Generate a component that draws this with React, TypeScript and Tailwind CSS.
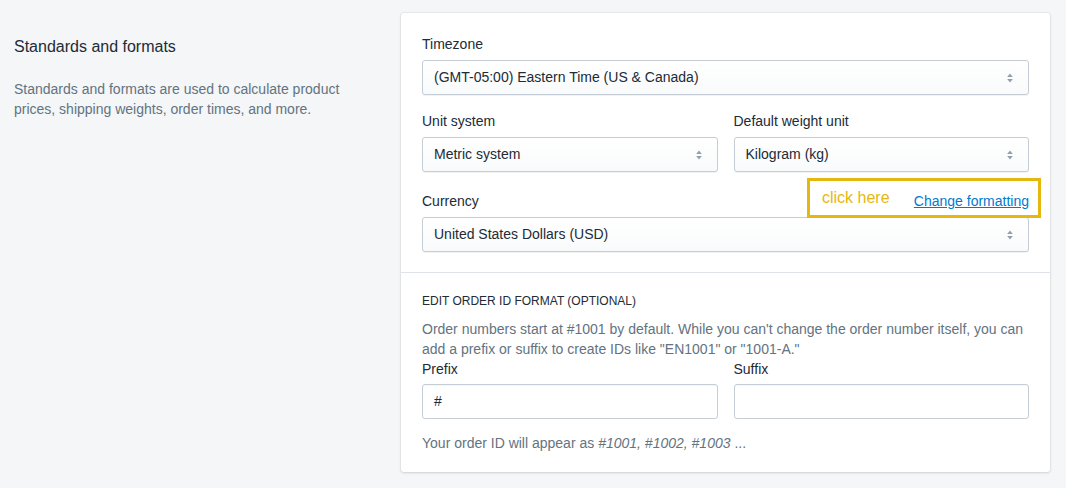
import React from 'react';

const Chevrons: React.FC = () => (
  <svg width="8" height="12" viewBox="0 0 8 12" className="shrink-0">
    <path d="M4 1.5 L6.8 5 H1.2 Z" fill="#919eab" />
    <path d="M4 10.5 L6.8 7 H1.2 Z" fill="#919eab" />
  </svg>
);

const Select: React.FC<{ value: string }> = ({ value }) => (
  <div className="h-[35px] flex items-center justify-between pl-[11px] pr-[14px] rounded-[3px] border border-[#c4cdd5] bg-gradient-to-b from-white to-[#f9fafb] shadow-[0_1px_0_0_rgba(22,29,37,0.05)] text-[14px] text-[#212b36]">
    <span>{value}</span>
    <Chevrons />
  </div>
);

const Input: React.FC<{ value?: string }> = ({ value }) => (
  <div className="h-[35px] flex items-center pl-[11px] rounded-[3px] border border-[#c4cdd5] bg-white shadow-[inset_0_1px_0_0_rgba(99,115,129,0.05)] text-[14px] text-[#212b36]">
    {value}
  </div>
);

const Label: React.FC<{ children: React.ReactNode }> = ({ children }) => (
  <div className="text-[14px] leading-[20px] text-[#212b36] mb-[6px]">{children}</div>
);

export default function App() {
  return (
    <div
      className="min-h-[488px] w-[1066px] bg-[#f4f6f8] flex items-start"
      style={{ fontFamily: '"Liberation Sans", Arial, sans-serif' }}
    >
      <div className="w-[401px] shrink-0 pl-[14px] pr-[40px] pt-[37px]">
        <h2 className="text-[16px] leading-[20px] font-medium text-[#212b36]">Standards and formats</h2>
        <p className="mt-[22px] text-[14px] leading-[20px] text-[#637381]">
          Standards and formats are used to calculate product prices, shipping weights, order times, and more.
        </p>
      </div>

      <div className="mt-[13px] w-[649px] bg-white rounded-[3px] shadow-[0_0_0_1px_rgba(63,63,68,0.05),0_1px_3px_0_rgba(63,63,68,0.15)]">
        <div className="px-[21px] pt-[21px] pb-[20px] flex flex-col gap-[16px]">
          <div>
            <Label>Timezone</Label>
            <Select value="(GMT-05:00) Eastern Time (US & Canada)" />
          </div>
          <div className="grid grid-cols-2 gap-[16px]">
            <div>
              <Label>Unit system</Label>
              <Select value="Metric system" />
            </div>
            <div>
              <Label>Default weight unit</Label>
              <Select value="Kilogram (kg)" />
            </div>
          </div>
          <div className="pt-[3px]">
            <div className="relative flex items-end justify-between mb-[6px]">
              <span className="text-[14px] leading-[20px] text-[#212b36]">Currency</span>
              <a className="text-[14px] leading-[20px] text-[#007ace] underline">Change formatting</a>
              <div className="absolute right-[-12px] top-[-13px] w-[234px] h-[40px] border-[3px] border-[#e6b70f] pointer-events-none flex items-center pl-[12px]">
                <span className="text-[16px] text-[#e6b70f]">click here</span>
              </div>
            </div>
            <Select value="United States Dollars (USD)" />
          </div>
        </div>

        <div className="border-t border-[#dfe3e8] px-[21px] pt-[18px] pb-[19px]">
          <h3 className="text-[12px] leading-[20px] uppercase text-[#212b36]">Edit order ID format (optional)</h3>
          <p className="mt-[8px] text-[14px] leading-[20px] text-[#637381]">
            Order numbers start at #1001 by default. While you can't change the order number itself, you can add a prefix or suffix to create IDs like "EN1001" or "1001-A."
          </p>
          <div className="grid grid-cols-2 gap-[16px]">
            <div>
              <div className="text-[14px] leading-[20px] text-[#212b36] mb-[5px]">Prefix</div>
              <Input value="#" />
            </div>
            <div>
              <div className="text-[14px] leading-[20px] text-[#212b36] mb-[5px]">Suffix</div>
              <Input />
            </div>
          </div>
          <p className="mt-[14px] text-[14px] leading-[20px] text-[#637381]">
            Your order ID will appear as <em>#1001, #1002, #1003</em> ...
          </p>
        </div>
      </div>
    </div>
  );
}
